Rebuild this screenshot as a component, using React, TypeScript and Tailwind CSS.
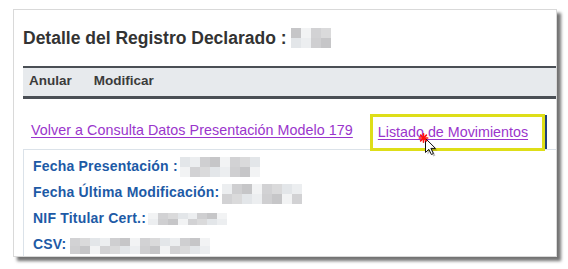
const palette = [
  "bg-[#e3e6e9]",
  "bg-[#d2d2d4]",
  "bg-[#c6c6c8]",
  "bg-[#eceef0]",
  "bg-[#dadadb]",
  "bg-[#f2f3f4]",
  "bg-[#cfcfd1]",
];

const Blur = ({ size, cols, rows, seed }: { size: string; cols: number; rows: number; seed: number }) => {
  return (
    <span className={`inline-flex flex-col shrink-0 ${size}`}>
      {Array.from({ length: rows }).map((_, r) => (
        <span key={r} className="flex flex-1">
          {Array.from({ length: cols }).map((_, c) => (
            <span key={c} className={`flex-1 ${palette[(c * 3 + r * 5 + seed) % palette.length]}`} />
          ))}
        </span>
      ))}
    </span>
  );
};

const Cursor = () => (
  <svg className="absolute left-[417px] top-[132px]" width="24" height="26" viewBox="0 0 24 26">
    {/* shadow */}
    <path d="M10.5 8.5 L10.5 22.5 L13.8 19.3 L16.4 24.5 L18.4 23.5 L15.9 18.4 L20.5 18.4 Z" fill="rgba(0,0,0,0.25)" />
    {/* arrow */}
    <path d="M8.5 6.5 L8.5 20.5 L11.8 17.3 L14.4 22.5 L16.4 21.5 L13.9 16.4 L18.5 16.4 Z" fill="#fff" stroke="#111" strokeWidth="1" strokeLinejoin="round" />
    {/* click mark */}
    <g stroke="#ff1010" strokeWidth="1.6" strokeLinecap="round">
      <line x1="6.5" y1="1.8" x2="6.5" y2="10.2" />
      <line x1="2.3" y1="6" x2="10.7" y2="6" />
      <line x1="3.6" y1="3.1" x2="9.4" y2="8.9" />
      <line x1="9.4" y1="3.1" x2="3.6" y2="8.9" />
    </g>
  </svg>
);

export default function App() {
  const rows = [
    { label: "Fecha Presentación :", blur: "w-[80px] h-[20px] ml-[2px] mt-[4px]", cols: 8, r: 2, seed: 0 },
    { label: "Fecha Última Modificación:", blur: "w-[80px] h-[20px] ml-[3px] mt-[5px]", cols: 8, r: 2, seed: 3 },
    { label: "NIF Titular Cert.:", blur: "w-[79px] h-[12px] ml-[2px] mt-[8px]", cols: 8, r: 2, seed: 5 },
    { label: "CSV: ", blur: "w-[140px] h-[16px] ml-[4px] mt-[7px]", cols: 14, r: 2, seed: 1 },
  ];

  return (
    <div className="relative w-[568px] h-[269px] bg-white overflow-hidden font-['Liberation_Sans',Arial,sans-serif]">
      <div className="ml-[13px] mt-[9px] w-[544px] h-[248px] bg-white border border-[#d9d9d9] shadow-[4px_4px_3px_rgba(0,0,0,0.55)] overflow-hidden">
        <div className="pl-[9px]">
          {/* Title */}
          <div className="flex items-start pt-[18px]">
            <h1 className="text-[17.5px] leading-[20px] font-bold text-[#333333]">Detalle del Registro Declarado :</h1>
            <Blur size="w-[40px] h-[20px] ml-[4px]" cols={4} rows={2} seed={2} />
          </div>

          {/* Menu bar */}
          <div className="mt-[18px] border-t-[2px] border-b-[3px] border-[#4a4f55] bg-[#e7eaed] h-[33px] flex items-start gap-[22px] pl-[6px] pt-[5px] text-[13.5px] leading-[16px] font-bold text-[#3b3b3b]">
            <span>Anular</span>
            <span>Modificar</span>
          </div>

          {/* Tabs / links */}
          <div className="flex items-end h-[50px] pl-[8px] text-[14.3px] leading-[18px] text-[#9a35cc]">
            <span className="underline underline-offset-[2px] mb-[10px] tracking-[0.05px]">Volver a Consulta Datos Presentación Modelo 179</span>
            <span className="relative ml-[17px] w-[177px] h-[34px] border-r-[2px] border-[#1f3f7c] pl-[8px] pt-[8px]">
              <span className="underline underline-offset-[2px]">Listado de Movimientos</span>
              <span className="absolute left-0 -top-[1px] w-[175px] h-[37px] border-[3px] border-[#dede18]" />
            </span>
          </div>

          {/* Data box */}
          <div className="border-t border-l border-[#dbe2e9] pt-[3px] pl-[9px] text-[14px] leading-[26px] font-bold tracking-[0.2px] text-[#1d5aa6]">
            {rows.map((row) => (
              <div key={row.label} className="flex items-start h-[26px]">
                <span>{row.label}</span>
                <Blur size={row.blur} cols={row.cols} rows={row.r} seed={row.seed} />
              </div>
            ))}
          </div>
        </div>
      </div>
      <Cursor />
    </div>
  );
}
